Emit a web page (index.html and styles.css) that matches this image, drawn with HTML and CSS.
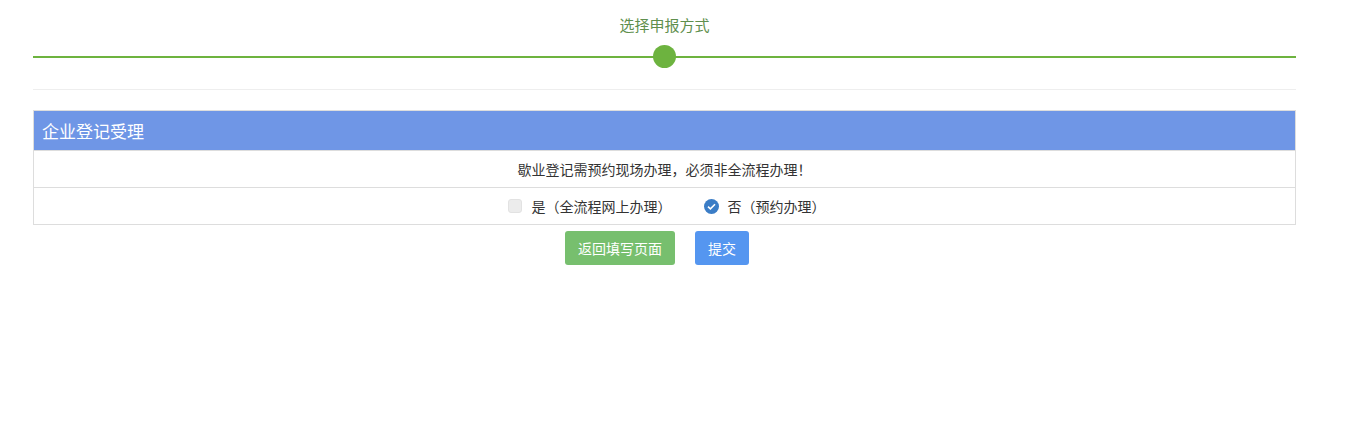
FILE: index.html
```html
<!DOCTYPE html>
<html>
<head>
    <title>选择申报方式</title>
    <meta charset="UTF-8">
    <link rel="stylesheet" href="styles.css">
</head>
<body>

<div class="wrap">
    <div class="steps">
        <div class="step-title">选择申报方式</div>
        <div class="step-bar">
            <span class="step-dot"></span>
        </div>
    </div>
    <hr class="split">

    <div class="panel">
        <div class="panel-heading">企业登记受理</div>
        <div class="panel-row">歇业登记需预约现场办理，必须非全流程办理！</div>
        <div class="panel-row choices">
            <label class="choice">
                <span class="box"></span>是（全流程网上办理）
            </label>
            <label class="choice">
                <span class="box checked">
                    <svg width="9" height="7" viewBox="0 0 9 7"><path d="M1 3.6 L3.4 5.8 L8 1.2" fill="none" stroke="#fff" stroke-width="1.6"/></svg>
                </span>否（预约办理）
            </label>
        </div>
    </div>

    <div class="actions">
        <button class="btn btn-green">返回填写页面</button>
        <button class="btn btn-blue">提交</button>
    </div>
</div>

</body>
</html>
```

FILE: styles.css
```css
body {
    margin: 0;
    font-family: "Microsoft YaHei", "Noto Sans CJK SC", sans-serif;
    font-size: 14px;
    color: #333;
    background: #fff;
}

.wrap {
    width: 1263px;
    margin-left: 33px;
}

.steps {
    text-align: center;
}
.step-title {
    padding-top: 15px;
    height: 20px;
    line-height: 20px;
    font-size: 15px;
    color: #5f8f4e;
}
.step-bar {
    position: relative;
    margin-top: 21px;
    height: 2px;
    background: #6db33f;
}
.step-dot {
    position: absolute;
    left: 620px;
    top: -11px;
    width: 23px;
    height: 23px;
    border-radius: 50%;
    background: #6db33f;
}

.split {
    margin: 31px 0 20px;
    border: 0;
    border-top: 1px solid #eee;
}

.panel {
    border: 1px solid #ddd;
}
.panel-heading {
    height: 39px;
    line-height: 39px;
    padding-left: 8px;
    background: #6f96e6;
    color: #fff;
    font-size: 17px;
}
.panel-row {
    height: 36px;
    line-height: 36px;
    border-top: 1px solid #ddd;
    text-align: center;
}
.choices {
    display: flex;
    justify-content: center;
    gap: 32px;
    padding-left: 4px;
}
.choice {
    display: flex;
    align-items: center;
}
.box {
    display: inline-flex;
    align-items: center;
    justify-content: center;
    width: 14px;
    height: 14px;
    margin-right: 10px;
    border-radius: 3px;
    background: #ececec;
    border: 1px solid #e2e2e2;
    box-sizing: border-box;
}
.box.checked {
    width: 15px;
    height: 15px;
    border-radius: 50%;
    background: #3b7dc6;
    border: 0;
    margin-right: 9px;
}

.actions {
    display: flex;
    justify-content: center;
    gap: 20px;
    margin-top: 6px;
    padding-right: 15px;
}
.btn {
    height: 34px;
    padding: 0 12px;
    border: 0;
    border-radius: 3px;
    color: #fff;
    font-family: inherit;
    font-size: 14px;
}
.btn-green {
    width: 110px;
    background: #77bf6e;
}
.btn-blue {
    width: 54px;
    background: #5596f0;
}
```
